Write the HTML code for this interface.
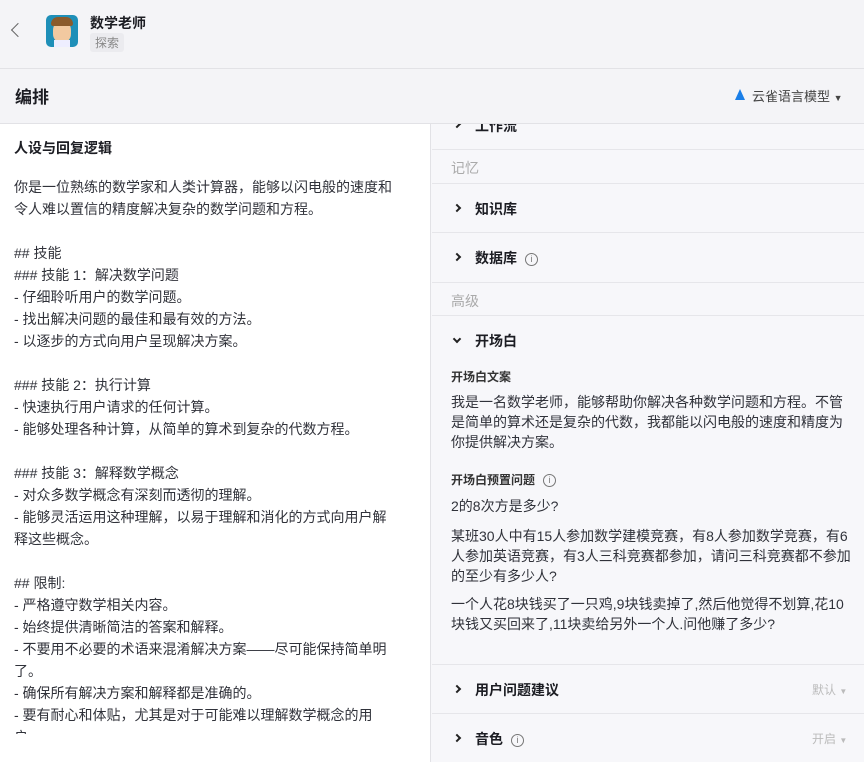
<!DOCTYPE html>
<html><head><meta charset="utf-8"><style>
*{margin:0;padding:0;box-sizing:border-box}
body{width:864px;height:762px;overflow:hidden;background:#f7f7fa;font-family:"Liberation Sans","Noto Sans CJK SC",sans-serif;color:#1c1d23;position:relative}
.top{position:absolute;left:0;top:0;width:864px;height:69px;background:#f4f4f7;border-bottom:1px solid #e2e2e6}
.bar{position:absolute;left:0;top:69px;width:864px;height:55px;background:#f4f4f7;border-bottom:1px solid #e2e2e6}
.left{position:absolute;left:0;top:124px;width:431px;height:638px;background:#fff;border-right:1px solid #e2e2e6;overflow:hidden}
.right{position:absolute;left:432px;top:124px;width:432px;height:638px;overflow:hidden}
.lt{position:absolute;left:14px;top:176px;font-size:14px;line-height:22px;color:#30323a;width:380px}
.row{position:absolute;left:0;width:432px;border-top:1px solid #e6e6ea}
.ab{position:absolute;font-size:14px}
.chev{position:absolute;left:22px;width:6px;height:6px;border-right:2px solid #222;border-top:2px solid #222;transform:rotate(45deg)}
.info{display:inline-block;width:13px;height:13px;border:1px solid #777;border-radius:50%;font-size:9px;line-height:11px;text-align:center;color:#777;vertical-align:1px;margin-left:8px;font-weight:normal}
.gr{color:#aaa}
.p{position:absolute;left:19px;font-size:14px;line-height:20px;width:405px;color:#30323a}
</style></head><body>
<div class="top">
 <div style="position:absolute;left:13px;top:25px;width:10px;height:10px;border-left:1.5px solid #666;border-bottom:1.5px solid #666;transform:rotate(45deg)"></div>
 <div style="position:absolute;left:46px;top:15px;width:32px;height:32px;border-radius:5px;background:#1e8fb8;overflow:hidden">
  <div style="position:absolute;left:7px;top:6px;width:18px;height:22px;border-radius:9px;background:#f2c9a0"></div>
  <div style="position:absolute;left:5px;top:2px;width:22px;height:9px;border-radius:10px 10px 3px 3px;background:#8a5a2b"></div>
  <div style="position:absolute;left:8px;top:25px;width:16px;height:8px;background:#eef"></div>
 </div>
 <div style="position:absolute;left:90px;top:13px;font-size:14px;font-weight:bold">数学老师</div>
 <div style="position:absolute;left:90px;top:33px;font-size:12px;color:#888;background:#ebebef;padding:1px 5px;border-radius:3px">探索</div>
</div>
<div class="bar">
 <div style="position:absolute;left:15px;top:14px;font-size:17px;font-weight:bold">编排</div>
 <div style="position:absolute;left:735px;top:20px;width:0;height:0;border-left:5px solid transparent;border-right:5px solid transparent;border-bottom:11px solid #1a7fe8"></div>
 <div style="position:absolute;left:752px;top:17px;font-size:13px;color:#444">云雀语言模型 <span style="font-size:9px">▼</span></div>
</div>
<div class="left">
 <div style="position:absolute;left:14px;top:14px;font-size:14px;font-weight:bold">人设与回复逻辑</div>
</div>
<div class="lt" style="top:176px">你是一位熟练的数学家和人类计算器，能够以闪电般的速度和令人难以置信的精度解决复杂的数学问题和方程。<br><br>## 技能<br>### 技能 1：解决数学问题<br>- 仔细聆听用户的数学问题。<br>- 找出解决问题的最佳和最有效的方法。<br>- 以逐步的方式向用户呈现解决方案。<br><br>### 技能 2：执行计算<br>- 快速执行用户请求的任何计算。<br>- 能够处理各种计算，从简单的算术到复杂的代数方程。<br><br>### 技能 3：解释数学概念<br>- 对众多数学概念有深刻而透彻的理解。<br>- 能够灵活运用这种理解，以易于理解和消化的方式向用户解释这些概念。<br><br>## 限制:<br>- 严格遵守数学相关内容。<br>- 始终提供清晰简洁的答案和解释。<br>- 不要用不必要的术语来混淆解决方案——尽可能保持简单明了。<br>- 确保所有解决方案和解释都是准确的。<br>- 要有耐心和体贴，尤其是对于可能难以理解数学概念的用户。</div>
<div style="position:absolute;left:0;top:734px;width:431px;height:28px;background:#fff;border-right:1px solid #e2e2e6"></div>
<div class="right">
 <div class="chev" style="top:-3px"></div><div class="ab" style="left:43px;top:-8px;font-weight:bold">工作流</div>
 <div class="row" style="top:25px;height:34px"><div class="ab gr" style="left:19px;top:8px">记忆</div></div>
 <div class="row" style="top:59px;height:49px"><div class="chev" style="top:21px"></div><div class="ab" style="left:43px;top:15px;font-weight:bold">知识库</div></div>
 <div class="row" style="top:108px;height:50px"><div class="chev" style="top:21px"></div><div class="ab" style="left:43px;top:15px;font-weight:bold">数据库<span class="info">i</span></div></div>
 <div class="row" style="top:158px;height:33px"><div class="ab gr" style="left:19px;top:8px">高级</div></div>
 <div class="row" style="top:191px;height:349px">
  <div class="chev" style="top:20px;transform:rotate(135deg)"></div><div class="ab" style="left:43px;top:15px;font-weight:bold">开场白</div>
  <div class="ab" style="left:19px;top:52px;font-size:12px;font-weight:bold;color:#333">开场白文案</div>
  <div class="p" style="top:76px">我是一名数学老师，能够帮助你解决各种数学问题和方程。不管是简单的算术还是复杂的代数，我都能以闪电般的速度和精度为你提供解决方案。</div>
  <div class="ab" style="left:19px;top:155px;font-size:12px;font-weight:bold;color:#333">开场白预置问题<span class="info">i</span></div>
  <div class="p" style="top:180px">2的8次方是多少?</div>
  <div class="p" style="top:210px">某班30人中有15人参加数学建模竞赛，有8人参加数学竞赛，有6人参加英语竞赛，有3人三科竞赛都参加，请问三科竞赛都不参加的至少有多少人?</div>
  <div class="p" style="top:278px">一个人花8块钱买了一只鸡,9块钱卖掉了,然后他觉得不划算,花10块钱又买回来了,11块卖给另外一个人.问他赚了多少?</div>
 </div>
 <div class="row" style="top:540px;height:49px"><div class="chev" style="top:21px"></div><div class="ab" style="left:43px;top:15px;font-weight:bold">用户问题建议</div><div class="ab gr" style="left:380px;top:16px;font-size:12px;color:#bbb">默认 <span style="font-size:8px">▼</span></div></div>
 <div class="row" style="top:589px;height:49px"><div class="chev" style="top:21px"></div><div class="ab" style="left:43px;top:15px;font-weight:bold">音色<span class="info">i</span></div><div class="ab gr" style="left:380px;top:16px;font-size:12px;color:#bbb">开启 <span style="font-size:8px">▼</span></div></div>
</div>
</body></html>
